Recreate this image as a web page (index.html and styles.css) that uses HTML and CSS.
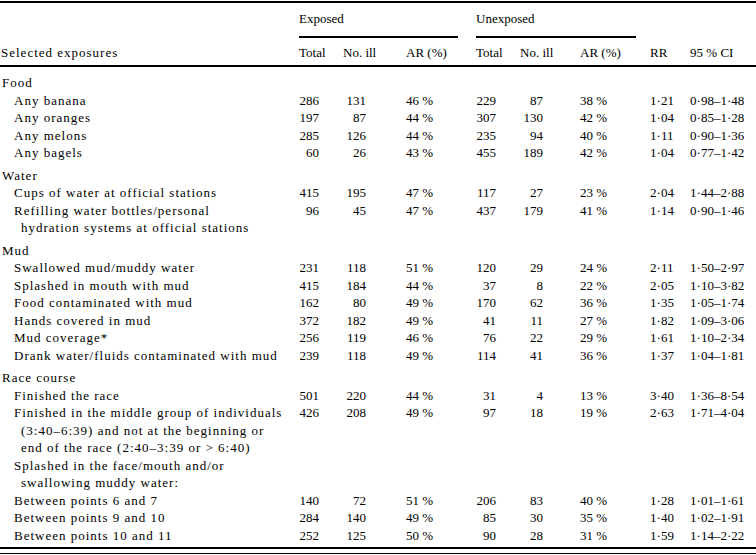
FILE: index.html
```html
<!DOCTYPE html>
<html lang="en">
<head>
<meta charset="utf-8">
<title>Selected exposures</title>
<link rel="stylesheet" href="styles.css">
</head>
<body>
<div class="wrap">
<table class="t">
<colgroup>
<col class="c-lbl"><col class="c-tot"><col class="c-ill"><col class="c-ar"><col class="c-tot"><col class="c-ill2"><col class="c-ar"><col class="c-rr"><col class="c-ci">
</colgroup>
<thead>
<tr class="h1">
<th class="lbl"></th>
<th colspan="3" class="grp"><div class="grp-in grp-exp">Exposed</div></th>
<th colspan="3" class="grp"><div class="grp-in grp-unexp">Unexposed</div></th>
<th></th><th></th>
</tr>
<tr class="h2">
<th class="lbl">Selected exposures</th>
<th>Total</th><th>No. ill</th><th>AR (%)</th>
<th>Total</th><th>No. ill</th><th>AR (%)</th>
<th>RR</th><th>95&nbsp;% CI</th>
</tr>
</thead>
<tbody>
<tr class="sec first"><td class="lbl head" colspan="9">Food</td></tr>
<tr><td class="lbl item">Any banana</td><td class="n1">286</td><td class="n2">131</td><td>46&nbsp;%</td><td class="n1">229</td><td class="n3">87</td><td>38&nbsp;%</td><td>1·21</td><td>0·98–1·48</td></tr>
<tr><td class="lbl item">Any oranges</td><td class="n1">197</td><td class="n2">87</td><td>44&nbsp;%</td><td class="n1">307</td><td class="n3">130</td><td>42&nbsp;%</td><td>1·04</td><td>0·85–1·28</td></tr>
<tr><td class="lbl item">Any melons</td><td class="n1">285</td><td class="n2">126</td><td>44&nbsp;%</td><td class="n1">235</td><td class="n3">94</td><td>40&nbsp;%</td><td>1·11</td><td>0·90–1·36</td></tr>
<tr><td class="lbl item">Any bagels</td><td class="n1">60</td><td class="n2">26</td><td>43&nbsp;%</td><td class="n1">455</td><td class="n3">189</td><td>42&nbsp;%</td><td>1·04</td><td>0·77–1·42</td></tr>

<tr class="sec"><td class="lbl head" colspan="9">Water</td></tr>
<tr><td class="lbl item">Cups of water at official stations</td><td class="n1">415</td><td class="n2">195</td><td>47&nbsp;%</td><td class="n1">117</td><td class="n3">27</td><td>23&nbsp;%</td><td>2·04</td><td>1·44–2·88</td></tr>
<tr><td class="lbl item">Refilling water bottles/personal<br>hydration systems at official stations</td><td class="n1">96</td><td class="n2">45</td><td>47&nbsp;%</td><td class="n1">437</td><td class="n3">179</td><td>41&nbsp;%</td><td>1·14</td><td>0·90–1·46</td></tr>

<tr class="sec"><td class="lbl head" colspan="9">Mud</td></tr>
<tr><td class="lbl item">Swallowed mud/muddy water</td><td class="n1">231</td><td class="n2">118</td><td>51&nbsp;%</td><td class="n1">120</td><td class="n3">29</td><td>24&nbsp;%</td><td>2·11</td><td>1·50–2·97</td></tr>
<tr><td class="lbl item">Splashed in mouth with mud</td><td class="n1">415</td><td class="n2">184</td><td>44&nbsp;%</td><td class="n1">37</td><td class="n3">8</td><td>22&nbsp;%</td><td>2·05</td><td>1·10–3·82</td></tr>
<tr><td class="lbl item">Food contaminated with mud</td><td class="n1">162</td><td class="n2">80</td><td>49&nbsp;%</td><td class="n1">170</td><td class="n3">62</td><td>36&nbsp;%</td><td>1·35</td><td>1·05–1·74</td></tr>
<tr><td class="lbl item">Hands covered in mud</td><td class="n1">372</td><td class="n2">182</td><td>49&nbsp;%</td><td class="n1">41</td><td class="n3">11</td><td>27&nbsp;%</td><td>1·82</td><td>1·09–3·06</td></tr>
<tr><td class="lbl item">Mud coverage*</td><td class="n1">256</td><td class="n2">119</td><td>46&nbsp;%</td><td class="n1">76</td><td class="n3">22</td><td>29&nbsp;%</td><td>1·61</td><td>1·10–2·34</td></tr>
<tr><td class="lbl item">Drank water/fluids contaminated with mud</td><td class="n1">239</td><td class="n2">118</td><td>49&nbsp;%</td><td class="n1">114</td><td class="n3">41</td><td>36&nbsp;%</td><td>1·37</td><td>1·04–1·81</td></tr>

<tr class="sec"><td class="lbl head" colspan="9">Race course</td></tr>
<tr><td class="lbl item">Finished the race</td><td class="n1">501</td><td class="n2">220</td><td>44&nbsp;%</td><td class="n1">31</td><td class="n3">4</td><td>13&nbsp;%</td><td>3·40</td><td>1·36–8·54</td></tr>
<tr><td class="lbl item">Finished in the middle group of individuals<br>(3:40–6:39) and not at the beginning or<br>end of the race (2:40–3:39 or &gt;&nbsp;6:40)</td><td class="n1">426</td><td class="n2">208</td><td>49&nbsp;%</td><td class="n1">97</td><td class="n3">18</td><td>19&nbsp;%</td><td>2·63</td><td>1·71–4·04</td></tr>
<tr><td class="lbl item">Splashed in the face/mouth and/or<br>swallowing muddy water:</td><td></td><td></td><td></td><td></td><td></td><td></td><td></td><td></td></tr>
<tr><td class="lbl item">Between points 6 and 7</td><td class="n1">140</td><td class="n2">72</td><td>51&nbsp;%</td><td class="n1">206</td><td class="n3">83</td><td>40&nbsp;%</td><td>1·28</td><td>1·01–1·61</td></tr>
<tr><td class="lbl item">Between points 9 and 10</td><td class="n1">284</td><td class="n2">140</td><td>49&nbsp;%</td><td class="n1">85</td><td class="n3">30</td><td>35&nbsp;%</td><td>1·40</td><td>1·02–1·91</td></tr>
<tr class="last"><td class="lbl item">Between points 10 and 11</td><td class="n1">252</td><td class="n2">125</td><td>50&nbsp;%</td><td class="n1">90</td><td class="n3">28</td><td>31&nbsp;%</td><td>1·59</td><td>1·14–2·22</td></tr>
</tbody>
</table>
</div>
</body>
</html>
```

FILE: styles.css
```css
html, body {
  margin: 0;
  padding: 0;
  background: #fff;
}

body {
  color: #000;
  font-family: "Liberation Serif", "Times New Roman", serif;
  font-size: 13px;
}

.wrap {
  width: 756px;
  padding-bottom: 4px;
  border-bottom: 1px solid #000;
}

.t {
  width: 756px;
  table-layout: fixed;
  border-collapse: separate;
  border-spacing: 0;
  margin-top: 1px;
  border-top: 2px solid #000;
  border-bottom: 2px solid #000;
}

.c-lbl { width: 299px; }
.c-tot { width: 44px; }
.c-ill { width: 63px; }
.c-ill2 { width: 60px; }
.c-ar { width: 70px; }
.c-rr { width: 40px; }
.c-ci { width: 66px; }

th, td {
  padding: 0;
  text-align: left;
  vertical-align: top;
  white-space: nowrap;
  font-weight: normal;
}

/* header */
.h1 th {
  line-height: 16px;
  padding-top: 8px;
  vertical-align: bottom;
}

.grp-in {
  border-bottom: 2px solid #000;
  padding-bottom: 9px;
}

.grp-exp { margin-right: 18px; }
.grp-unexp { margin-right: 14px; }

.h2 th {
  line-height: 16px;
  padding-top: 7px;
  padding-bottom: 4px;
  border-bottom: 2px solid #000;
}

/* body */
tbody td {
  line-height: 17.5px;
}

.sec td {
  padding-top: 5px;
}

.sec.first td {
  padding-top: 7px;
}

.last td {
  padding-bottom: 3px;
}

.lbl {
  letter-spacing: 1px;
}

th.lbl {
  padding-left: 1px;
}

.head {
  padding-left: 2px;
}

.item {
  padding-left: 21px;
  text-indent: -7px;
}

.n1, .n2, .n3 {
  text-align: right;
}

.n1 { padding-right: 24px; }
.n2 { padding-right: 40px; }
.n3 { padding-right: 37px; }
```
